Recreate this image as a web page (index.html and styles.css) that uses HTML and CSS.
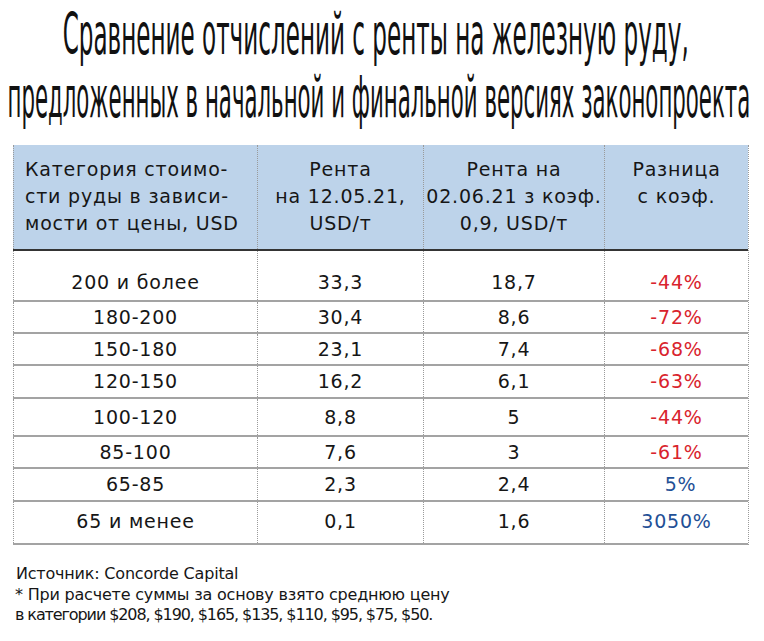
FILE: index.html
```html
<!DOCTYPE html>
<html lang="ru">
<head>
<meta charset="utf-8">
<title>Сравнение отчислений</title>
<link rel="stylesheet" href="styles.css">
</head>
<body>
<div class="page">
  <h1 class="title">
    <span class="tl t1">Сравнение отчислений с ренты на железную руду,</span>
    <span class="tl t2">предложенных в начальной и финальной версиях законопроекта</span>
  </h1>
  <div class="table">
    <div class="row head">
      <div class="cell left">Категория стоимо-<br>сти руды в зависи-<br>мости от цены, USD</div>
      <div class="cell">Рента<br>на 12.05.21,<br>USD/т</div>
      <div class="cell">Рента на<br>02.06.21 з коэф.<br>0,9, USD/т</div>
      <div class="cell">Разница<br>с коэф.</div>
    </div>
    <div class="row r-first">
      <div class="cell">200 и более</div><div class="cell">33,3</div><div class="cell">18,7</div><div class="cell neg">-44%</div>
    </div>
    <div class="row r32">
      <div class="cell">180-200</div><div class="cell">30,4</div><div class="cell">8,6</div><div class="cell neg">-72%</div>
    </div>
    <div class="row r32">
      <div class="cell">150-180</div><div class="cell">23,1</div><div class="cell">7,4</div><div class="cell neg">-68%</div>
    </div>
    <div class="row r33">
      <div class="cell">120-150</div><div class="cell">16,2</div><div class="cell">6,1</div><div class="cell neg">-63%</div>
    </div>
    <div class="row r38">
      <div class="cell">100-120</div><div class="cell">8,8</div><div class="cell">5</div><div class="cell neg">-44%</div>
    </div>
    <div class="row r32">
      <div class="cell">85-100</div><div class="cell">7,6</div><div class="cell">3</div><div class="cell neg">-61%</div>
    </div>
    <div class="row r33">
      <div class="cell">65-85</div><div class="cell">2,3</div><div class="cell">2,4</div><div class="cell pos shift">5%</div>
    </div>
    <div class="row r-last">
      <div class="cell">65 и менее</div><div class="cell">0,1</div><div class="cell">1,6</div><div class="cell pos">3050%</div>
    </div>
  </div>
  <div class="footer">
    <p class="source">Источник: Concorde Capital</p>
    <p class="note">* При расчете суммы за основу взято среднюю цену<br><span class="prices">в категории $208, $190, $165, $135, $110, $95, $75, $50.</span></p>
  </div>
</div>
</body>
</html>
```

FILE: styles.css
```css
* { box-sizing: border-box; }
html, body { margin: 0; padding: 0; background: #fff; }
body {
  width: 764px;
  height: 641px;
  overflow: hidden;
  font-family: "DejaVu Sans", "Noto Sans", sans-serif;
  color: #161616;
}
.page { width: 764px; }
.title {
  margin: 0;
  padding-top: 3px;
  height: 129px;
  display: flex;
  flex-direction: column;
  align-items: center;
  font-family: "DejaVu Sans Condensed", "DejaVu Sans", sans-serif;
  font-weight: normal;
  font-size: 57px;
  line-height: 63px;
  color: #111;
}
.tl {
  display: block;
  flex: none;
  white-space: nowrap;
  transform-origin: 50% 50%;
}
.t1 { transform: translateX(-6px) scaleX(0.45); }
.t2 { transform: translateX(-3px) scaleX(0.415); }

.table {
  margin: 16px 0 0 13px;
  width: 736px;
  border-right: 1px dotted #9a9a9a;
}
.row {
  display: grid;
  grid-template-columns: 244px 166px 181px 144px;
  border-bottom: 2px solid #a3a3a3;
  font-size: 19px;
  letter-spacing: 0.8px;
  line-height: 27px;
}
.cell {
  border-left: 1px dotted #9a9a9a;
  display: flex;
  align-items: center;
  justify-content: center;
  text-align: center;
}
.head {
  background: #bdd3ea;
  height: 106px;
  border-bottom: 2px solid #343434;
}
.head .cell {
  align-items: flex-start;
  padding-top: 11px;
}
.head .left {
  justify-content: flex-start;
  text-align: left;
  padding-left: 11px;
}
.r-first { height: 51px; }
.r-first .cell { align-items: flex-end; padding-bottom: 4px; }
.r32 { height: 32px; }
.r33 { height: 33px; }
.r38 { height: 38px; }
.r-last { height: 43px; }
.r-last .cell { padding-bottom: 2px; }
.neg { color: #d9232d; }
.pos { color: #1f5096; }
.shift { padding-left: 8px; }

.footer {
  padding-left: 15px;
  margin-top: 18px;
  font-size: 16px;
  letter-spacing: -0.2px;
  color: #161616;
}
.footer p { margin: 0; }
.source { line-height: 22px; margin-bottom: 9px; padding-left: 1px; }
.note { line-height: 20px; }
.prices { letter-spacing: -1.1px; }
```
